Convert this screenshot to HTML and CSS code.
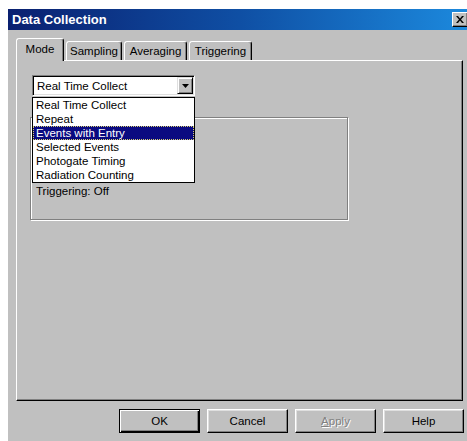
FILE: index.html
```html
<!DOCTYPE html>
<html>
<head>
<meta charset="utf-8">
<title>Data Collection</title>
<link rel="stylesheet" href="styles.css">
</head>
<body>
<div class="dialog">
  <div class="titlebar">
    <span class="title">Data Collection</span>
    <span class="close">
      <svg width="8" height="7" viewBox="0 0 8 7"><path d="M0 0h2l2 2.5L6 0h2L5 3.5 8 7H6L4 4.5 2 7H0l3-3.5z" fill="#000"/></svg>
    </span>
  </div>
  <div class="content">
    <div class="tabs">
      <div class="tab active w-mode">Mode</div>
      <div class="tab w-sampling">Sampling</div>
      <div class="tab w-averaging">Averaging</div>
      <div class="tab w-triggering">Triggering</div>
    </div>
    <div class="panel">
      <div class="combo-wrap">
        <div class="combo">
          <span class="combo-text">Real Time Collect</span>
          <span class="combo-btn">
            <svg width="7" height="4" viewBox="0 0 7 4"><path d="M0 0h7L3.5 4z" fill="#000"/></svg>
          </span>
        </div>
        <ul class="list">
          <li>Real Time Collect</li>
          <li>Repeat</li>
          <li class="selected">Events with Entry</li>
          <li>Selected Events</li>
          <li>Photogate Timing</li>
          <li>Radiation Counting</li>
        </ul>
      </div>
      <div class="group">
        <div class="group-line">Triggering: Off</div>
      </div>
    </div>
    <div class="buttons">
      <button class="btn default">OK</button>
      <button class="btn">Cancel</button>
      <button class="btn disabled"><u>A</u>pply</button>
      <button class="btn">Help</button>
    </div>
  </div>
</div>
</body>
</html>
```

FILE: styles.css
```css
html, body {
  margin: 0;
  background: #fff;
  overflow: hidden;
}

body {
  font-family: "Liberation Sans", Arial, sans-serif;
  font-size: 11.5px;
  color: #000;
}

.dialog {
  margin: 9px 0 0 8px;
  width: 463px;
  height: 432px;
  background: #c0c0c0;
  display: flex;
  flex-direction: column;
}

/* caption bar */
.titlebar {
  height: 21px;
  flex: none;
  display: flex;
  align-items: center;
  justify-content: space-between;
  padding-left: 4px;
  background: linear-gradient(to right, #0a2070 0%, #0f4fa4 50%, #1c8ade 100%);
  color: #fff;
  font-weight: bold;
  font-size: 13px;
}

.close {
  width: 16px;
  height: 15px;
  margin-right: 3px;
  box-sizing: border-box;
  background: #c0c0c0;
  border: 1px solid;
  border-color: #fff #000 #000 #fff;
  box-shadow: inset -1px -1px #808080;
  display: flex;
  align-items: center;
  justify-content: center;
}

.content {
  flex: 1;
  display: flex;
  flex-direction: column;
  padding: 8px;
}

/* tab strip */
.tabs {
  height: 22px;
  display: flex;
  align-items: flex-end;
  gap: 2px;
  position: relative;
  z-index: 1;
}

.tab {
  height: 19px;
  box-sizing: border-box;
  border: 1px solid;
  border-bottom: none;
  border-color: #fff #000 transparent #fff;
  box-shadow: inset -1px 0 #808080;
  border-radius: 3px 3px 0 0;
  background: #c0c0c0;
  display: flex;
  align-items: center;
  justify-content: center;
  padding-bottom: 1px;
}

.tab.active {
  height: 23px;
  margin-bottom: -1px;
  padding-bottom: 3px;
}

.w-mode { width: 48px; }
.w-sampling { width: 56px; }
.w-averaging { width: 63px; }
.w-triggering { width: 63px; }

/* tab page */
.panel {
  flex: 1;
  position: relative;
  border: 1px solid;
  border-color: #fff #000 #000 #fff;
  box-shadow: inset -1px -1px #808080;
  padding: 14px 0 0 15px;
}

.combo-wrap {
  position: relative;
  width: 163px;
}

.combo {
  height: 21px;
  box-sizing: border-box;
  background: #fff;
  border: 1px solid;
  border-color: #808080 #fff #fff #808080;
  box-shadow: inset 1px 1px #000, inset -1px -1px #dfdfdf;
  display: flex;
  align-items: center;
  padding: 1px;
}

.combo-text {
  flex: 1;
  padding-left: 3px;
}

.combo-btn {
  width: 16px;
  height: 17px;
  box-sizing: border-box;
  background: #c0c0c0;
  border: 1px solid;
  border-color: #dfdfdf #000 #000 #dfdfdf;
  box-shadow: inset 1px 1px #fff, inset -1px -1px #808080;
  display: flex;
  align-items: center;
  justify-content: center;
}

/* dropped list */
.list {
  position: absolute;
  top: calc(100% + 1px);
  left: 0;
  width: 163px;
  box-sizing: border-box;
  margin: 0;
  padding: 0;
  list-style: none;
  background: #fff;
  border: 1px solid #000;
  z-index: 2;
}

.list li {
  height: 14px;
  line-height: 14px;
  padding-left: 3px;
  white-space: nowrap;
}

.list li.selected {
  background: #0a0a80;
  color: #fff;
  outline: 1px dotted #d8d070;
  outline-offset: -1px;
}

/* settings summary frame */
.group {
  margin: 21px 0 0 -2px;
  width: 318px;
  height: 103px;
  box-sizing: border-box;
  border: 1px solid #808080;
  box-shadow: 1px 1px #fff, inset 1px 1px #fff;
  padding: 66px 0 0 5px;
}

.group-line {
  height: 14px;
  line-height: 14px;
}

/* command buttons */
.buttons {
  display: flex;
  justify-content: flex-end;
  gap: 7px;
  margin-top: 8px;
  margin-right: -1px;
}

.btn {
  width: 81px;
  height: 24px;
  box-sizing: border-box;
  margin: 0;
  padding: 0;
  font: inherit;
  color: #000;
  background: #c0c0c0;
  border: 1px solid;
  border-color: #fff #000 #000 #fff;
  box-shadow: inset -1px -1px #808080, inset 1px 1px #dfdfdf;
}

.btn.default {
  border-color: #000;
  box-shadow: inset 1px 1px #fff, inset -1px -1px #000, inset -2px -2px #808080;
}

.btn.disabled {
  color: #808080;
  text-shadow: 1px 1px #fff;
}

.btn u {
  text-decoration: underline;
}
```
